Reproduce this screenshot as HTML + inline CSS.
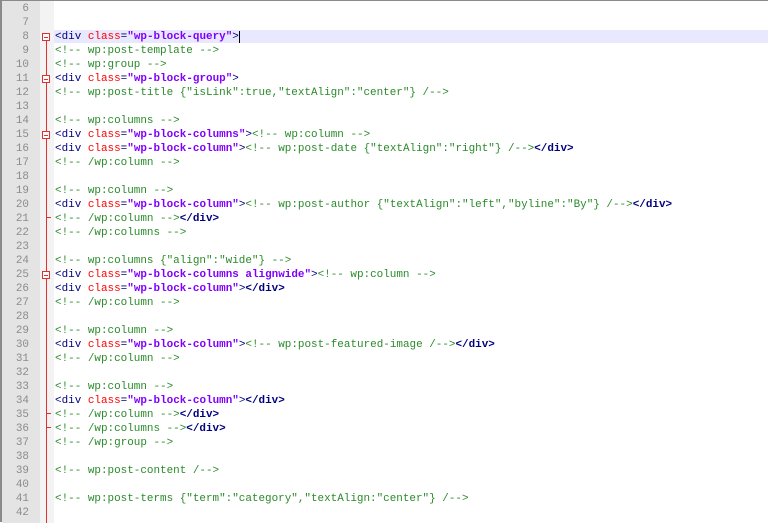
<!DOCTYPE html>
<html><head><meta charset="utf-8"><style>
html,body{margin:0;padding:0;width:768px;height:522px;overflow:hidden;background:#fff}
#w{position:absolute;left:0;top:0;width:768px;height:522px;border-top:1px solid #8a8a8a;border-left:2px solid #8a8a8a;box-sizing:border-box}
#gut{position:absolute;left:0;top:0;width:38px;height:522px;background:#e4e4e4}
#fold{position:absolute;left:38px;top:0;width:14px;height:522px;background:#f3f3f3}
#hl{position:absolute;left:52px;top:29px;width:716px;height:13px;background:#e8e8ff}
.l{position:absolute;left:0;height:14px;line-height:14px;font-family:"Liberation Mono",monospace;font-size:10.95px;white-space:pre}
.n{width:27px;text-align:right;color:#8c8c8c}
.t{left:52px}
.c{color:#2a8a2a}.g{color:#000080}.a{color:#ff0000}.v{color:#8000ff;font-weight:bold}.d{color:#000080;font-weight:bold}
#vl{position:absolute;left:44px;top:37px;width:1px;height:485px;background:#e03030}
.bx{position:absolute;left:40px;width:8px;height:8px;border:1px solid #e03030;background:#fff;box-sizing:border-box}
.bx:after{content:"";position:absolute;left:1px;top:3px;width:4px;height:1px;background:#e03030}
.tk{position:absolute;left:44px;width:5px;height:1px;background:#e03030}
</style></head><body><div id="w">
<div id="gut"></div><div id="fold"></div><div id="hl"></div><div id="vl"></div>
<div class="bx" style="top:32px"></div><div class="bx" style="top:74px"></div><div class="bx" style="top:130px"></div><div class="bx" style="top:270px"></div>
<div class="tk" style="top:216px"></div><div class="tk" style="top:412px"></div><div class="tk" style="top:426px"></div>
<div id="lines"></div>
<script>
var L={8:'<g>&lt;div</g> <a>class</a><g>=</g><v>"wp-block-query"</v><g>&gt;</g><span style="border-left:1px solid #000"></span>',
9:'<c>&lt;!-- wp:post-template --&gt;</c>',10:'<c>&lt;!-- wp:group --&gt;</c>',
11:'<g>&lt;div</g> <a>class</a><g>=</g><v>"wp-block-group"</v><g>&gt;</g>',
12:'<c>&lt;!-- wp:post-title {"isLink":true,"textAlign":"center"} /--&gt;</c>',
14:'<c>&lt;!-- wp:columns --&gt;</c>',
15:'<g>&lt;div</g> <a>class</a><g>=</g><v>"wp-block-columns"</v><g>&gt;</g><c>&lt;!-- wp:column --&gt;</c>',
16:'<g>&lt;div</g> <a>class</a><g>=</g><v>"wp-block-column"</v><g>&gt;</g><c>&lt;!-- wp:post-date {"textAlign":"right"} /--&gt;</c><d>&lt;/div&gt;</d>',
17:'<c>&lt;!-- /wp:column --&gt;</c>',19:'<c>&lt;!-- wp:column --&gt;</c>',
20:'<g>&lt;div</g> <a>class</a><g>=</g><v>"wp-block-column"</v><g>&gt;</g><c>&lt;!-- wp:post-author {"textAlign":"left","byline":"By"} /--&gt;</c><d>&lt;/div&gt;</d>',
21:'<c>&lt;!-- /wp:column --&gt;</c><d>&lt;/div&gt;</d>',22:'<c>&lt;!-- /wp:columns --&gt;</c>',
24:'<c>&lt;!-- wp:columns {"align":"wide"} --&gt;</c>',
25:'<g>&lt;div</g> <a>class</a><g>=</g><v>"wp-block-columns alignwide"</v><g>&gt;</g><c>&lt;!-- wp:column --&gt;</c>',
26:'<g>&lt;div</g> <a>class</a><g>=</g><v>"wp-block-column"</v><g>&gt;</g><d>&lt;/div&gt;</d>',
27:'<c>&lt;!-- /wp:column --&gt;</c>',29:'<c>&lt;!-- wp:column --&gt;</c>',
30:'<g>&lt;div</g> <a>class</a><g>=</g><v>"wp-block-column"</v><g>&gt;</g><c>&lt;!-- wp:post-featured-image /--&gt;</c><d>&lt;/div&gt;</d>',
31:'<c>&lt;!-- /wp:column --&gt;</c>',33:'<c>&lt;!-- wp:column --&gt;</c>',
34:'<g>&lt;div</g> <a>class</a><g>=</g><v>"wp-block-column"</v><g>&gt;</g><d>&lt;/div&gt;</d>',
35:'<c>&lt;!-- /wp:column --&gt;</c><d>&lt;/div&gt;</d>',36:'<c>&lt;!-- /wp:columns --&gt;</c><d>&lt;/div&gt;</d>',
37:'<c>&lt;!-- /wp:group --&gt;</c>',39:'<c>&lt;!-- wp:post-content /--&gt;</c>',
41:'<c>&lt;!-- wp:post-terms {"term":"category","textAlign:"center"} /--&gt;</c>'};
var h='';
for(var n=6;n<=42;n++){var y=1+(n-6)*14;
h+='<div class="l n" style="top:'+y+'px">'+n+'</div>';
if(L[n]){var s=L[n].replace(/<(\/?)([cgavd])>/g,function(m,e,k){return e?'</span>':'<span class="'+k+'">';});
h+='<div class="l t" style="top:'+y+'px;left:53px">'+s+'</div>';}}
document.getElementById('lines').innerHTML=h;
</script>
</div></body></html>
